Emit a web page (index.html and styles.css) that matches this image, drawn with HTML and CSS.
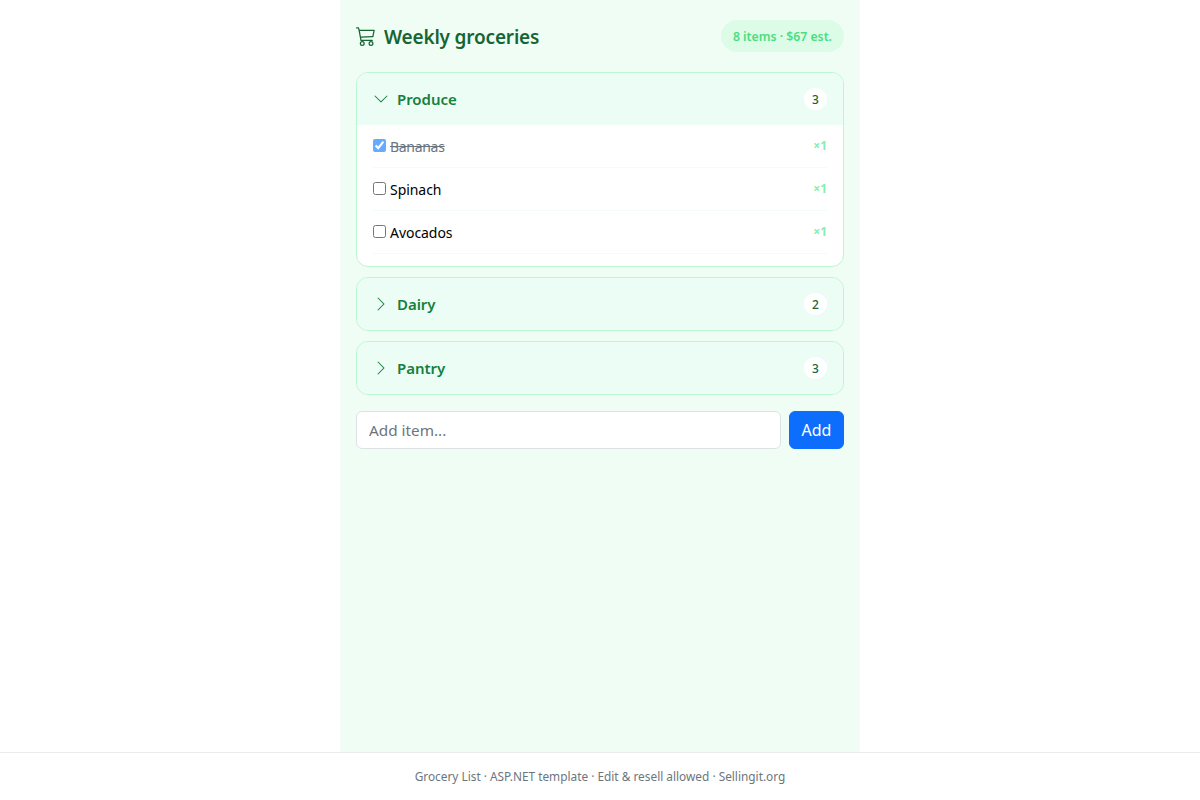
FILE: index.html
```html
<!DOCTYPE html>
<html lang="en">
<head>
<meta charset="utf-8">
<title>Grocery List</title>
<link rel="stylesheet" href="styles.css">
</head>
<body>
<main class="app">
  <header class="top">
    <h1 class="title">
      <svg class="cart" viewBox="0 0 16 16" fill="currentColor"><path d="M0 1.5A.5.5 0 0 1 .5 1H2a.5.5 0 0 1 .485.379L2.89 3H14.5a.5.5 0 0 1 .49.598l-1 5a.5.5 0 0 1-.465.401l-9.397.472L4.415 11H13a.5.5 0 0 1 0 1H4a.5.5 0 0 1-.491-.408L2.01 3.607 1.61 2H.5a.5.5 0 0 1-.5-.5zM3.102 4l.84 4.479 9.144-.459L13.89 4H3.102zM5 12a2 2 0 1 0 0 4 2 2 0 0 0 0-4zm7 0a2 2 0 1 0 0 4 2 2 0 0 0 0-4zm-7 1a1 1 0 1 1 0 2 1 1 0 0 1 0-2zm7 0a1 1 0 1 1 0 2 1 1 0 0 1 0-2z"/></svg>
      <span class="title-text">Weekly groceries</span>
    </h1>
    <span class="pill">8 items · $67 est.</span>
  </header>

  <section class="group">
    <div class="group-head">
      <svg class="chev" viewBox="0 0 16 16" fill="currentColor"><path d="M1.646 4.646a.5.5 0 0 1 .708 0L8 10.293l5.646-5.647a.5.5 0 0 1 .708.708l-6 6a.5.5 0 0 1-.708 0l-6-6a.5.5 0 0 1 0-.708z"/></svg>
      <span class="group-name">Produce</span>
      <span class="count">3</span>
    </div>
    <ul class="items">
      <li class="item done"><label class="item-label"><input type="checkbox" class="check" checked><span class="item-name">Bananas</span></label><span class="qty">×1</span></li>
      <li class="item"><label class="item-label"><input type="checkbox" class="check"><span class="item-name">Spinach</span></label><span class="qty">×1</span></li>
      <li class="item"><label class="item-label"><input type="checkbox" class="check"><span class="item-name">Avocados</span></label><span class="qty">×1</span></li>
    </ul>
  </section>

  <section class="group">
    <div class="group-head">
      <svg class="chev" viewBox="0 0 16 16" fill="currentColor"><path d="M4.646 1.646a.5.5 0 0 1 .708 0l6 6a.5.5 0 0 1 0 .708l-6 6a.5.5 0 0 1-.708-.708L10.293 8 4.646 2.354a.5.5 0 0 1 0-.708z"/></svg>
      <span class="group-name">Dairy</span>
      <span class="count">2</span>
    </div>
  </section>

  <section class="group">
    <div class="group-head">
      <svg class="chev" viewBox="0 0 16 16" fill="currentColor"><path d="M4.646 1.646a.5.5 0 0 1 .708 0l6 6a.5.5 0 0 1 0 .708l-6 6a.5.5 0 0 1-.708-.708L10.293 8 4.646 2.354a.5.5 0 0 1 0-.708z"/></svg>
      <span class="group-name">Pantry</span>
      <span class="count">3</span>
    </div>
  </section>

  <form class="add">
    <input class="add-input" type="text" placeholder="Add item...">
    <button class="add-btn" type="button">Add</button>
  </form>
</main>
<footer class="foot">Grocery List · ASP.NET template · Edit &amp; resell allowed · Sellingit.org</footer>
</body>
</html>
```

FILE: styles.css
```css
* { box-sizing: border-box; }
html, body { height: 100%; }
body {
  margin: 0;
  display: flex;
  flex-direction: column;
  background: #fff;
  color: #212529;
  font-family: "Noto Sans", "Open Sans", sans-serif;
  font-size: 16px;
  line-height: 1.5;
}
.app {
  flex: 1;
  width: 520px;
  margin: 0 auto;
  padding: 20px 16px 16px;
  background: #f0fdf4;
}
.top {
  display: flex;
  align-items: center;
  justify-content: space-between;
  height: 32px;
  margin-bottom: 20px;
}
.title {
  display: flex;
  align-items: center;
  gap: 8px;
  margin: 0;
  font-size: 19px;
  font-weight: 600;
  letter-spacing: -.18px;
  color: #166534;
}
.title-text { padding-top: 2px; }
.cart { width: 20px; height: 20px; color: #166534; }
.pill {
  display: flex;
  align-items: center;
  height: 32px;
  padding: 2px 12px 0;
  border-radius: 16px;
  background: #dcfce7;
  color: #4ade80;
  font-size: 12.25px;
  font-weight: 600;
}
.group {
  margin-bottom: 10px;
  border: 1px solid #bbf7d0;
  border-radius: 12px;
  overflow: hidden;
  background: #fff;
}
.group-head {
  display: flex;
  align-items: center;
  height: 52px;
  padding: 0 16px;
  background: #ecfdf5;
}
.chev { width: 16px; height: 16px; color: #15803d; }
.group-name {
  margin-left: 8px;
  padding-top: 1px;
  font-size: 15px;
  font-weight: 600;
  letter-spacing: -.05px;
  color: #15803d;
}
.count {
  display: flex;
  align-items: center;
  justify-content: center;
  width: 23px;
  height: 22px;
  padding-top: 1px;
  margin-left: auto;
  border-radius: 50%;
  background: #fff;
  color: #166534;
  font-size: 12px;
  font-weight: 500;
}
.items {
  list-style: none;
  margin: 0;
  padding: 0 16px 12px;
}
.item {
  display: flex;
  align-items: center;
  justify-content: space-between;
  height: 43px;
  border-bottom: 1px solid #f0fdf4;
}
.item-label { display: flex; align-items: center; }
.check { width: 13px; height: 13px; margin: -2px 4px 0 0; }
.item-name { font-size: 14px; letter-spacing: -.05px; color: #000; }
.done .check { opacity: .6; }
.done .item-name { color: #6c757d; letter-spacing: -.3px; text-decoration: line-through; }
.qty { font-size: 12px; font-weight: 700; color: #86efac; }
.add {
  display: flex;
  gap: 8px;
  margin-top: 16px;
}
.add-input {
  flex: 1;
  min-width: 0;
  height: 38px;
  padding: 6px 12px;
  border: 1px solid #dee2e6;
  border-radius: 6px;
  background: #fff;
  font: inherit;
  font-size: 15.3px;
  color: #212529;
}
.add-input::placeholder { color: #6c757d; }
.add-btn {
  width: 55px;
  height: 38px;
  padding: 0;
  border: 1px solid #0d6efd;
  border-radius: 6px;
  background: #0d6efd;
  color: #fff;
  font: inherit;
}
.foot {
  height: 48px;
  border-top: 1px solid #e9ecef;
  background: #fff;
  color: #6c757d;
  font-size: 11.85px;
  line-height: 47px;
  text-align: center;
}
```
